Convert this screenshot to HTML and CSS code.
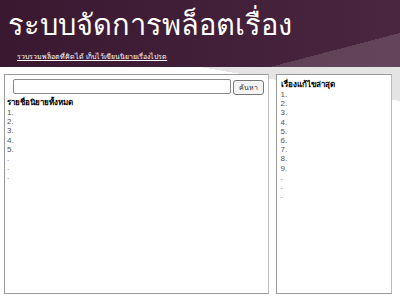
FILE: index.html
```
<!DOCTYPE html>
<html lang="th">

<head>
    <meta charset="UTF-8">
    <title>ระบบจัดการพล็อตเรื่อง</title>
    <link rel="stylesheet" href="styles.css">
</head>

<body>
    <div class="header">
        <h1>ระบบจัดการพล็อตเรื่อง</h1>
        <a href="#" class="tagline">รวบรวมพล็อตที่คิดได้ เก็บไว้เขียนนิยายเรื่องไปรด</a>
    </div>

    <div class="content">
        <div class="main-box">
            <div class="search">
                <input type="text" class="search-input">
                <button class="search-btn">ค้นหา</button>
            </div>
            <div class="list-title">รายชื่อนิยายทั้งหมด</div>
            <div class="list">
                <div>1.</div>
                <div>2.</div>
                <div>3.</div>
                <div>4.</div>
                <div>5.</div>
                <div>.</div>
                <div>.</div>
                <div>.</div>
            </div>
        </div>

        <div class="side-box">
            <div class="list-title">เรื่องแก้ไขล่าสุด</div>
            <div class="list">
                <div>1.</div>
                <div>2.</div>
                <div>3.</div>
                <div>4.</div>
                <div>5.</div>
                <div>6.</div>
                <div>7.</div>
                <div>8.</div>
                <div>9.</div>
                <div>.</div>
                <div>.</div>
                <div>.</div>
            </div>
        </div>
    </div>
</body>

</html>
```

FILE: styles.css
```
body {
    margin: 0;
    width: 400px;
    height: 300px;
    overflow: hidden;
    font-family: Tahoma, "DejaVu Sans", "Noto Sans", sans-serif;
    background-color: #fff;
    background-image: linear-gradient(to top right, transparent 50%, #e4e4e4 50%);
    background-repeat: no-repeat;
    background-size: 200px 34px;
    background-position: 200px 67px;
}

.header {
    height: 67px;
    box-sizing: border-box;
    padding: 6px 0 0 8px;
    background-color: #3c1c34;
    background-image:
        linear-gradient(to bottom right, transparent 50%, rgba(255, 255, 255, 0.14) 50%),
        linear-gradient(to right, #3a1830, #4a2640);
    background-repeat: no-repeat;
    background-size: 130px 34px, 100% 100%;
    background-position: 270px 33px, 0 0;
}

.header h1 {
    margin: 0;
    color: #fff;
    font-size: 29px;
    font-weight: normal;
    line-height: 38px;
}

.tagline {
    display: inline-block;
    margin: 4px 0 0 9px;
    color: #fff;
    font-size: 7px;
}

.content {
    display: flex;
    gap: 7px;
    padding: 7px 8px 0 4px;
}

.main-box,
.side-box {
    height: 220px;
    box-sizing: border-box;
    border: 1px solid #999;
    border-right-color: #bbb;
    background: #fff;
    font-size: 8px;
    color: #555;
}

.main-box {
    width: 266px;
    padding: 4px 2px;
}

.side-box {
    width: 117px;
    padding: 5px 4px;
}

.search {
    display: flex;
    gap: 2px;
    padding-left: 6px;
    margin-bottom: 3px;
}

.search-input {
    width: 218px;
    height: 15px;
    box-sizing: border-box;
    border: 1px solid #888;
    border-radius: 2px;
    margin: 0;
}

.search-btn {
    width: 31px;
    height: 15px;
    margin-top: 1px;
    padding: 0;
    font-family: inherit;
    font-size: 7px;
    color: #333;
    background: #f4f4f4;
    border: 1px solid #777;
    border-radius: 3px;
}

.list-title {
    font-weight: bold;
    color: #000;
    line-height: 10px;
}

.list {
    font-family: "Liberation Sans", Tahoma, sans-serif;
    line-height: 9.2px;
}
```
